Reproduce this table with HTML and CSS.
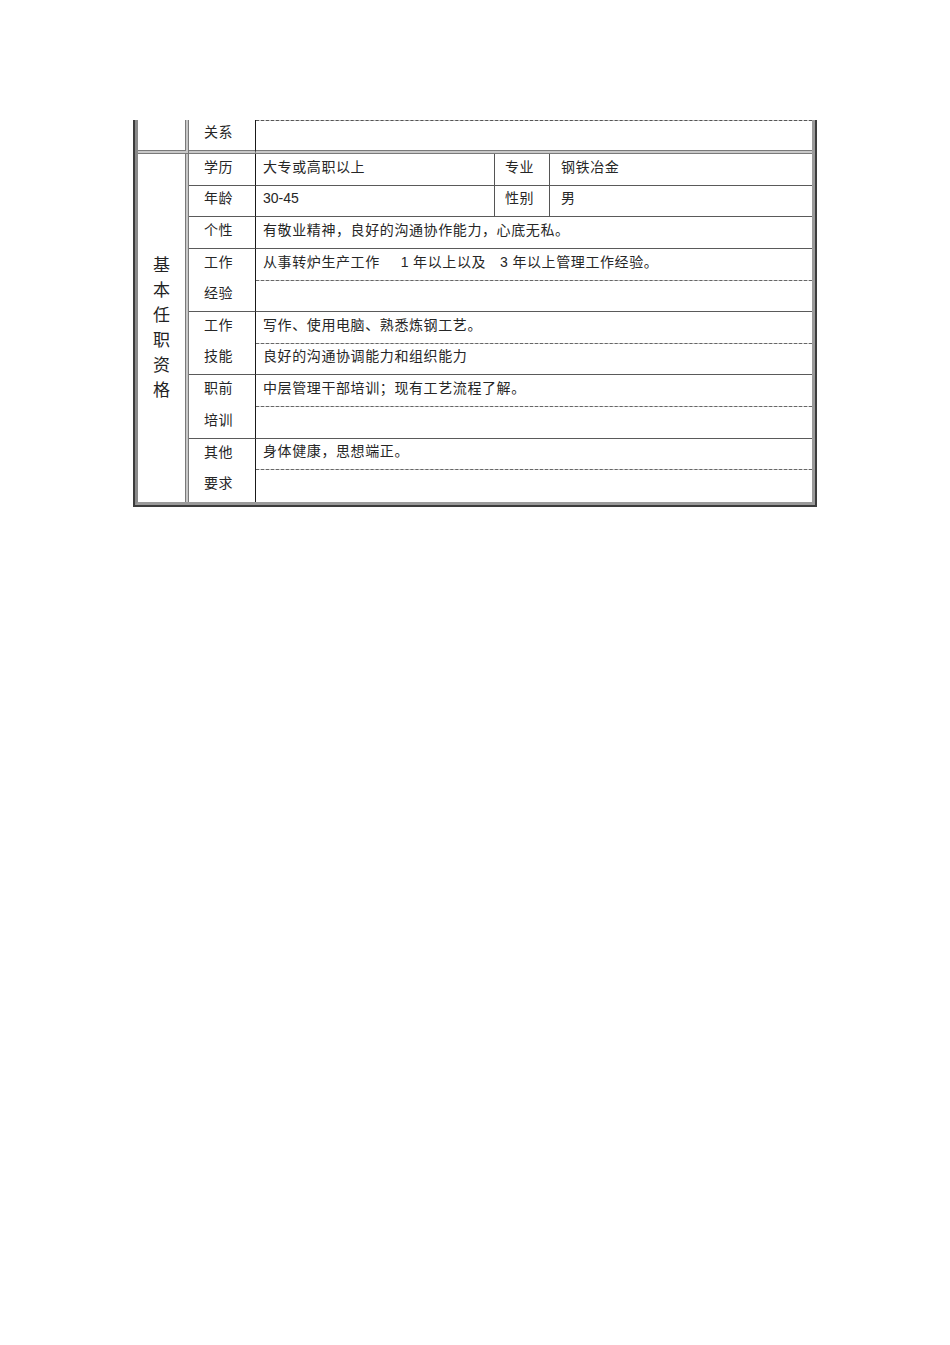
FILE: index.html
```html
<!DOCTYPE html>
<html lang="zh">
<head>
<meta charset="utf-8">
<title>任职资格</title>
<link rel="stylesheet" href="styles.css">
</head>
<body>
<div class="sheet">
  <table class="grid">
    <colgroup>
      <col class="c1"><col class="c2"><col class="c3"><col class="c4"><col class="c5">
    </colgroup>
    <tr class="r-top">
      <td class="side sep-dbl"></td>
      <td class="lab sep-dbl">关系</td>
      <td class="val top-dash sep-dbl" colspan="3"></td>
    </tr>
    <tr class="h32">
      <td class="side" rowspan="11"><div class="vert">基<br>本<br>任<br>职<br>资<br>格</div></td>
      <td class="lab line">学历</td>
      <td class="val line mid">大专或高职以上</td>
      <td class="lab2 line mid">专业</td>
      <td class="val2 line">钢铁冶金</td>
    </tr>
    <tr class="h31">
      <td class="lab line">年龄</td>
      <td class="val line mid num">30-45</td>
      <td class="lab2 line mid">性别</td>
      <td class="val2 line">男</td>
    </tr>
    <tr class="h32">
      <td class="lab line">个性</td>
      <td class="val line" colspan="3">有敬业精神，良好的沟通协作能力，心底无私。</td>
    </tr>
    <tr class="h32">
      <td class="lab">工作</td>
      <td class="val dash" colspan="3">从事转炉生产工作<span class="num gap1">1</span> 年以上以及<span class="num gap2">3</span> 年以上管理工作经验。</td>
    </tr>
    <tr class="h31">
      <td class="lab line">经验</td>
      <td class="val line" colspan="3"></td>
    </tr>
    <tr class="h32">
      <td class="lab">工作</td>
      <td class="val dash" colspan="3">写作、使用电脑、熟悉炼钢工艺。</td>
    </tr>
    <tr class="h31">
      <td class="lab line">技能</td>
      <td class="val line" colspan="3">良好的沟通协调能力和组织能力</td>
    </tr>
    <tr class="h32">
      <td class="lab">职前</td>
      <td class="val dash" colspan="3">中层管理干部培训；现有工艺流程了解。</td>
    </tr>
    <tr class="h32">
      <td class="lab line">培训</td>
      <td class="val line" colspan="3"></td>
    </tr>
    <tr class="h31">
      <td class="lab">其他</td>
      <td class="val dash" colspan="3">身体健康，思想端正。</td>
    </tr>
    <tr class="h32">
      <td class="lab">要求</td>
      <td class="val" colspan="3"></td>
    </tr>
  </table>
</div>
</body>
</html>
```

FILE: styles.css
```css
html, body {
  margin: 0;
  padding: 0;
  background: #ffffff;
}

body {
  font-family: "Liberation Sans", "Noto Sans CJK SC", sans-serif;
  color: #262626;
}

.sheet {
  margin: 120px 0 0 133px;
  width: 680px;
  border-left: 2px solid #3c3c3c;
  border-right: 2px solid #3c3c3c;
  border-bottom: 2px solid #3c3c3c;
}

.grid {
  width: 680px;
  table-layout: fixed;
  border-collapse: separate;
  border-spacing: 0;
  background: #c8c8c8;
  border-left: 3px solid #8a8a8a;
  border-right: 3px solid #9a9a9a;
  border-bottom: 3px solid #9a9a9a;
}

.c1 { width: 51px; }
.c2 { width: 67px; }
.c3 { width: 239px; }
.c4 { width: 55px; }
.c5 { width: 262px; }

td {
  background: #fff;
  background-clip: padding-box;
  padding: 0 0 6px 0;
  font-size: 14px;
  line-height: 16px;
  letter-spacing: 0.6px;
  vertical-align: middle;
  white-space: nowrap;
  box-sizing: border-box;
}

.r-top { height: 34px; }
.h32 { height: 32px; }
.h31 { height: 31px; }

.side {
  border-right: 4px double #7a7a7a;
  text-align: center;
  padding: 0;
}

.lab {
  border-right: 1px solid #1a1a1a;
  padding-left: 15px;
}

.val { padding-left: 7px; }

.lab2 { padding-left: 10px; }

.val2 { padding-left: 11px; }

.mid { border-right: 1px solid #555; }

.line { border-bottom: 1px solid #5a5a5a; }

.dash { border-bottom: 1px dashed #666; }

.sep-dbl { border-bottom: 4px double #7a7a7a; }

.top-dash { border-top: 1px dashed #555; }

.num {
  font-family: "Liberation Sans", sans-serif;
  letter-spacing: 0;
}

.gap1 { margin-left: 21px; }
.gap2 { margin-left: 14px; }

.vert {
  font-size: 17px;
  line-height: 25px;
  letter-spacing: 0;
  color: #222;
}
```
